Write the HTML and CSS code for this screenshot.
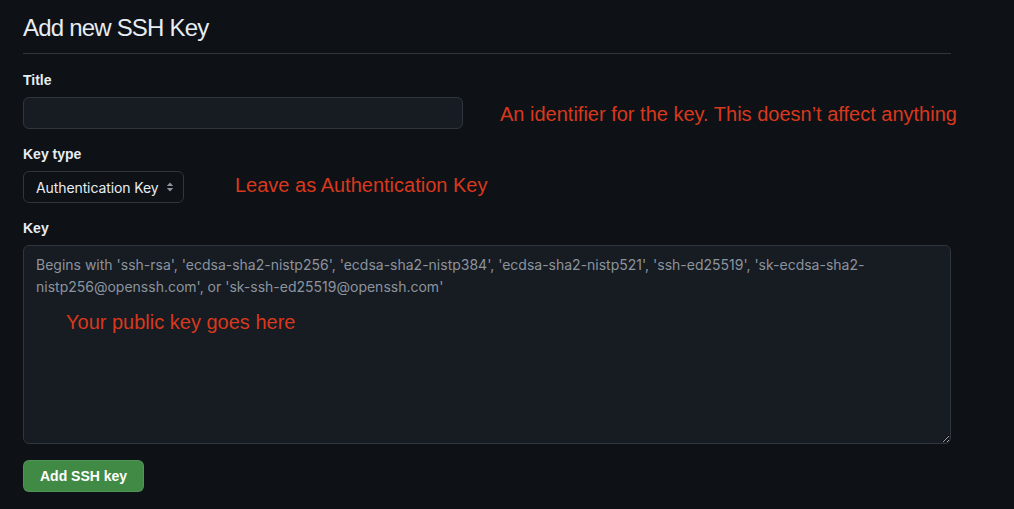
FILE: index.html
```html
<!DOCTYPE html>
<html lang="en">
<head>
    <meta charset="UTF-8">
    <meta name="viewport" content="width=device-width, initial-scale=1.0">
    <title>Add new SSH Key</title>
    <link rel="stylesheet" href="styles.css">
</head>
<body>
    <div class="page">
        <h2 class="page-title">Add new SSH Key</h2>

        <div class="form-group">
            <label class="form-label" for="title">Title</label>
            <div class="row">
                <input type="text" id="title" class="form-input">
                <span class="note note-title">An identifier for the key. This doesn’t affect anything</span>
            </div>
        </div>

        <div class="form-group">
            <label class="form-label" for="key-type">Key type</label>
            <div class="row">
                <div class="select">
                    <span>Authentication Key</span>
                    <svg class="select-arrows" width="8" height="12" viewBox="0 0 8 12">
                        <path d="M4 1.5 L7.2 5 H0.8 Z" fill="#8b949e"/>
                        <path d="M4 10.5 L7.2 7 H0.8 Z" fill="#8b949e"/>
                    </svg>
                </div>
                <span class="note note-type">Leave as Authentication Key</span>
            </div>
        </div>

        <div class="form-group">
            <label class="form-label" for="key">Key</label>
            <div class="key-wrap">
                <textarea id="key" class="form-textarea" placeholder="Begins with 'ssh-rsa', 'ecdsa-sha2-nistp256', 'ecdsa-sha2-nistp384', 'ecdsa-sha2-nistp521', 'ssh-ed25519', 'sk-ecdsa-sha2-nistp256@openssh.com', or 'sk-ssh-ed25519@openssh.com'"></textarea>
                <span class="note note-key">Your public key goes here</span>
            </div>
        </div>

        <button class="btn-primary">Add SSH key</button>
    </div>
</body>
</html>
```

FILE: styles.css
```css
html, body {
    margin: 0;
    background: #0e1116;
    color-scheme: dark;
}
body {
    font-family: "Liberation Sans", Arial, sans-serif;
    color: #e6edf3;
    font-size: 14px;
}
.page {
    width: 928px;
    padding: 0 23px;
}
.page-title {
    margin: 0;
    padding-top: 10px;
    padding-bottom: 7px;
    font-size: 24px;
    font-weight: 400;
    line-height: 36px;
    letter-spacing: -0.8px;
    border-bottom: 1px solid #30363d;
    margin-bottom: 16px;
}
.form-group {
    margin-bottom: 15px;
}
.form-label {
    display: block;
    font-weight: 700;
    line-height: 20px;
    margin-bottom: 7px;
}
.row {
    display: flex;
    align-items: center;
    height: 32px;
}
.form-input {
    box-sizing: border-box;
    flex: none;
    width: 440px;
    height: 32px;
    background: #171b22;
    border: 1px solid #30363d;
    border-radius: 6px;
    color: #e6edf3;
    padding: 0 12px;
    font: inherit;
}
.select {
    box-sizing: border-box;
    flex: none;
    width: 161px;
    height: 32px;
    display: flex;
    align-items: center;
    justify-content: space-between;
    padding: 0 9px 0 12px;
    border: 1px solid #30363d;
    border-radius: 6px;
    background: #0e1116;
    color: #e6edf3;
    font-family: Inter, "Liberation Sans", sans-serif;
    letter-spacing: -0.1px;
}
.note {
    color: #d8391d;
    font-size: 20px;
    line-height: 24px;
    white-space: nowrap;
}
.note-title {
    margin-left: 37px;
    position: relative;
    top: 1px;
}
.note-type {
    margin-left: 51px;
    position: relative;
    top: -2px;
}
.key-wrap {
    position: relative;
}
.form-textarea {
    box-sizing: border-box;
    display: block;
    width: 928px;
    height: 199px;
    background: #171b22;
    border: 1px solid #30363d;
    border-radius: 6px;
    color: #e6edf3;
    padding: 8px 12px;
    font: inherit;
    font-family: Inter, "Liberation Sans", sans-serif;
    line-height: 22px;
    resize: vertical;
}
.form-textarea::placeholder {
    color: #8b949e;
}
.note-key {
    position: absolute;
    left: 43px;
    top: 65px;
}
.btn-primary {
    display: block;
    margin-top: 16px;
    height: 32px;
    padding: 0 16px;
    border: 1px solid rgba(240, 246, 252, 0.1);
    border-radius: 6px;
    background: #418a45;
    color: #ffffff;
    font: inherit;
    font-weight: 700;
}
```
